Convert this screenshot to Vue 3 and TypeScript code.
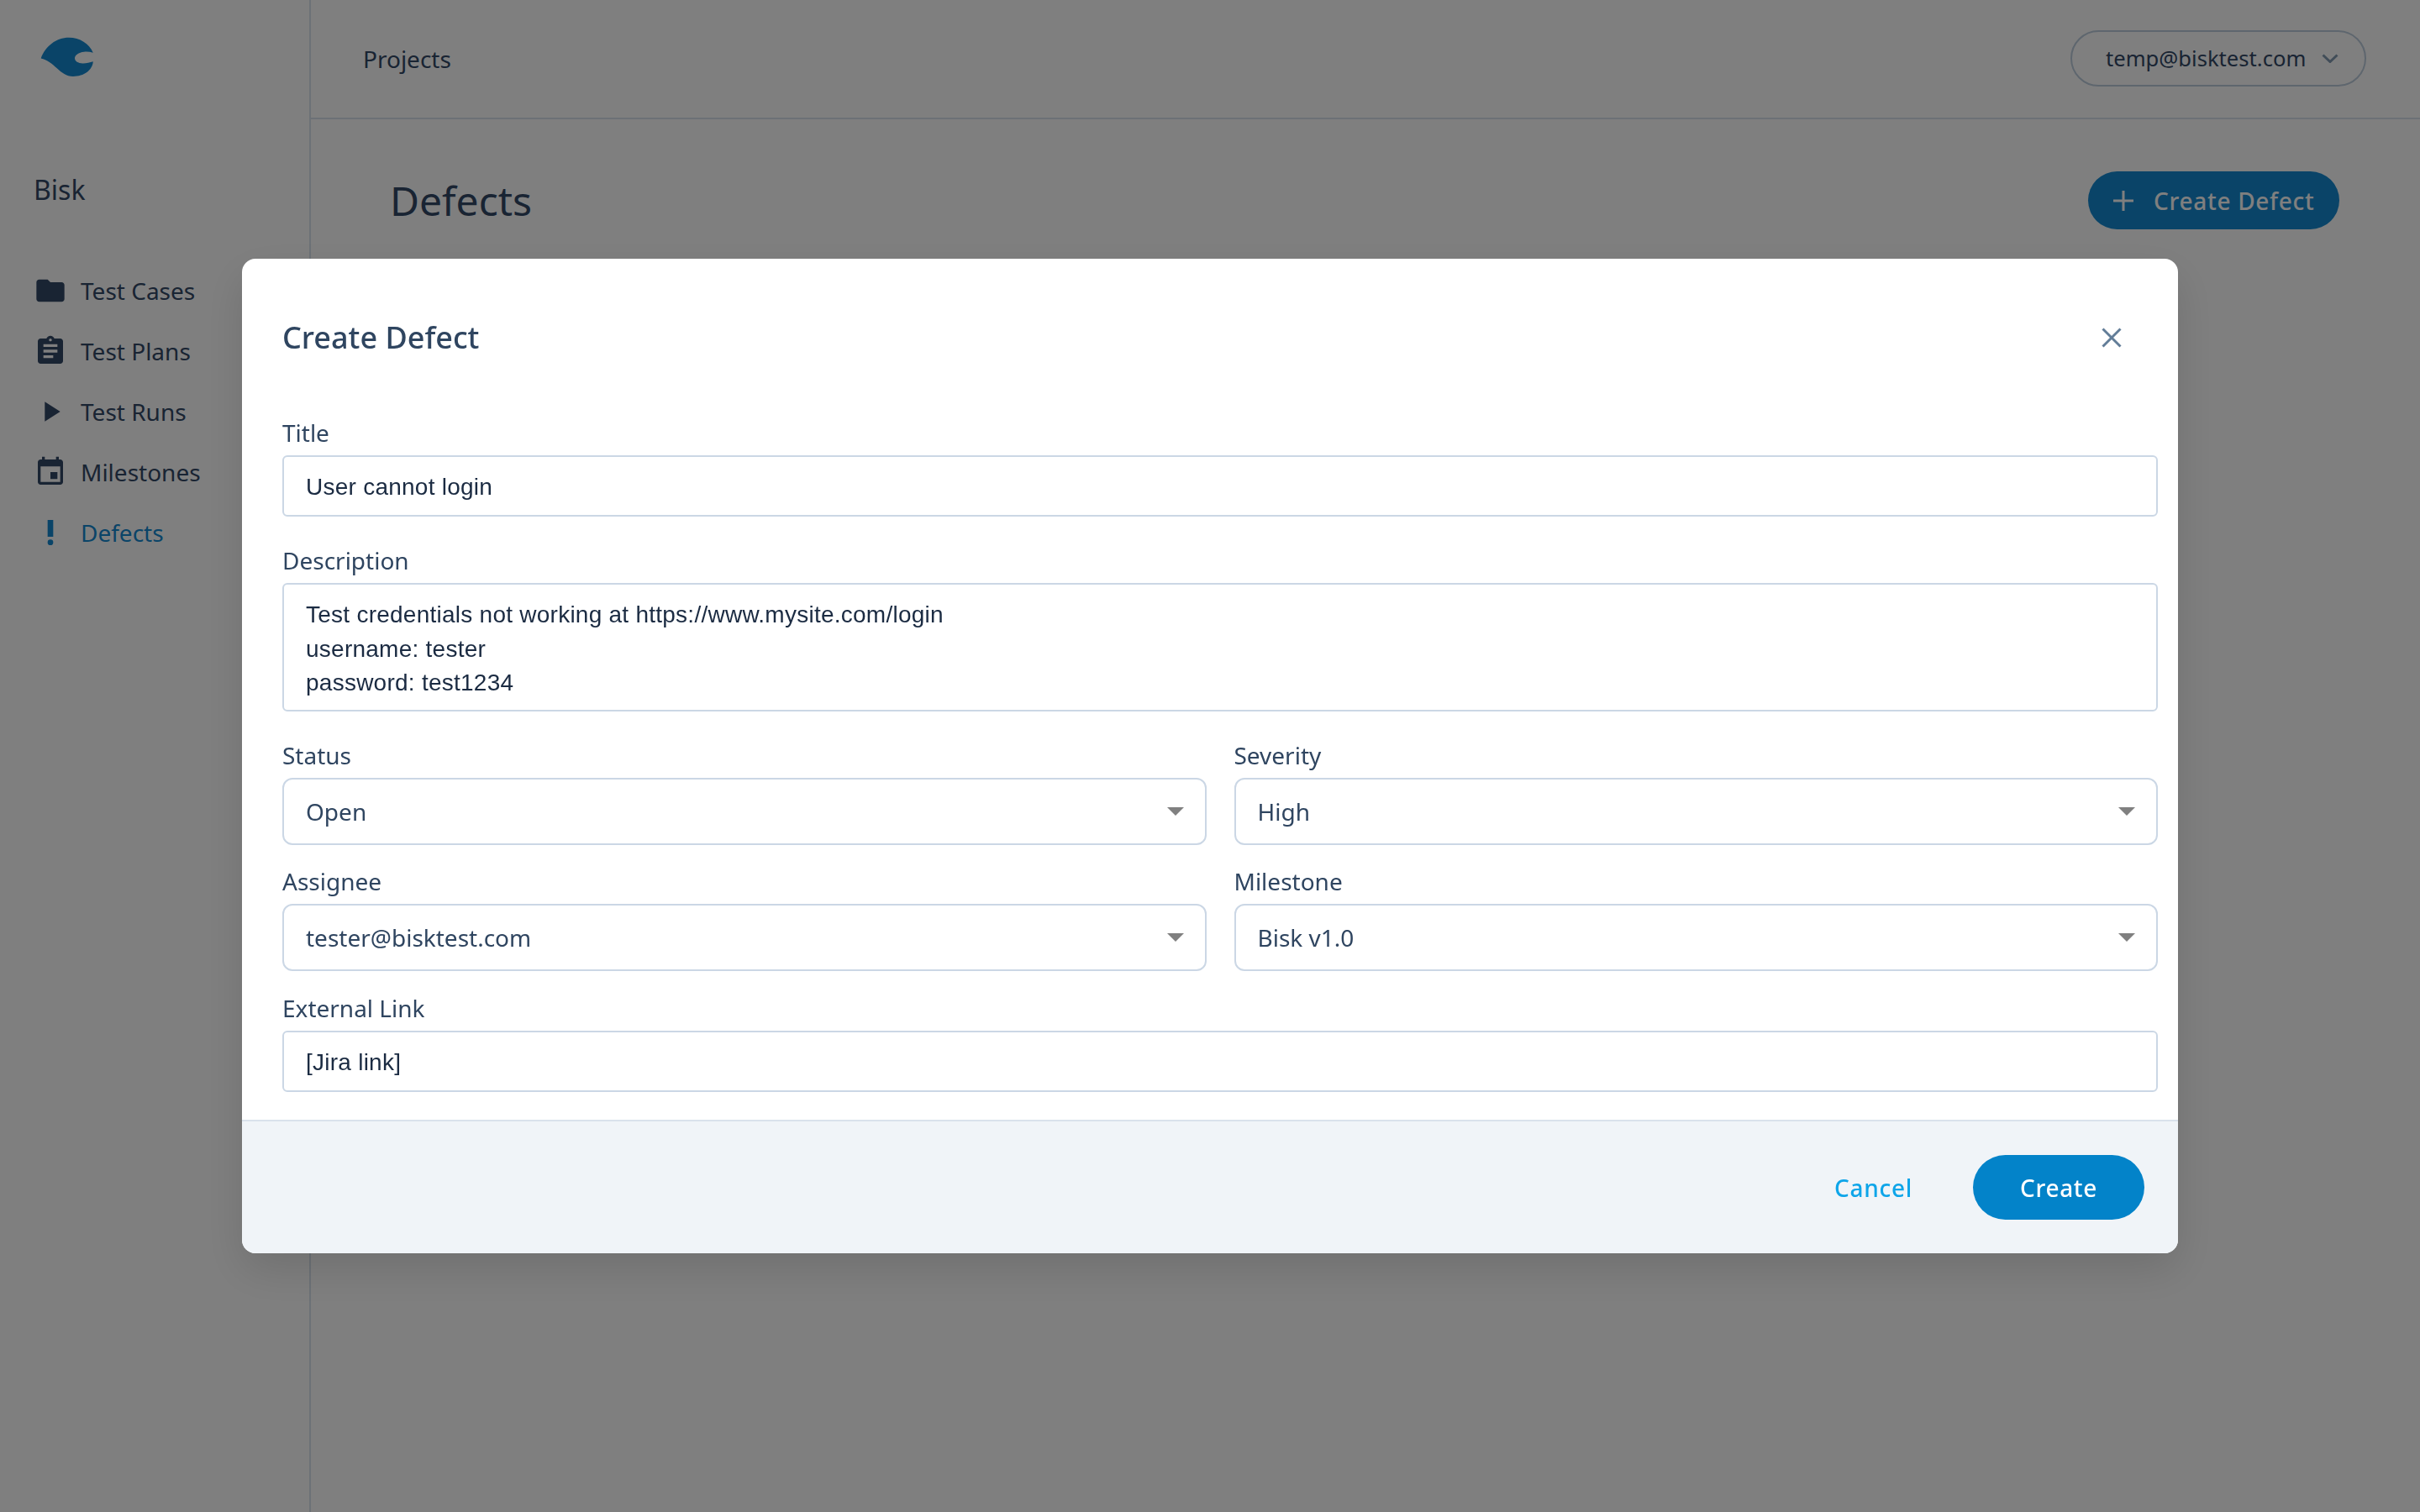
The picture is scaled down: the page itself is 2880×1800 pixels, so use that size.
<script setup lang="ts">
interface NavItem { label: string; active?: boolean; paths: string[] }
const navItems: NavItem[] = [
  { label: 'Test Cases', paths: ['M10 4H4c-1.1 0-1.99.9-1.99 2L2 18c0 1.1.9 2 2 2h16c1.1 0 2-.9 2-2V8c0-1.1-.9-2-2-2h-8l-2-2z'] },
  { label: 'Test Plans', paths: ['M19 3h-4.18C14.4 1.84 13.3 1 12 1c-1.3 0-2.4.84-2.82 2H5c-1.1 0-2 .9-2 2v14c0 1.1.9 2 2 2h14c1.1 0 2-.9 2-2V5c0-1.1-.9-2-2-2zm-7 0c.55 0 1 .45 1 1s-.45 1-1 1-1-.45-1-1 .45-1 1-1zm2 14H7v-2h7v2zm3-4H7v-2h10v2zm0-4H7V7h10v2z'] },
  { label: 'Test Runs', paths: ['M8 5v14l11-7z'] },
  { label: 'Milestones', paths: ['M17 12h-5v5h5v-5zM16 1v2H8V1H6v2H5c-1.11 0-1.99.9-1.99 2L3 19c0 1.1.89 2 2 2h14c1.1 0 2-.9 2-2V5c0-1.1-.9-2-2-2h-1V1h-2zm3 18H5V8h14v11z'] },
  { label: 'Defects', active: true, paths: ['M10 3h4v12h-4z', 'M14 19a2 2 0 1 1-4 0a2 2 0 0 1 4 0z'] },
]
const selects = [
  { label: 'Status', value: 'Open' },
  { label: 'Severity', value: 'High' },
  { label: 'Assignee', value: 'tester@bisktest.com' },
  { label: 'Milestone', value: 'Bisk v1.0' },
]
const description = 'Test credentials not working at https://www.mysite.com/login\nusername: tester\npassword: test1234'
</script>

<template>
  <div class="page">
    <aside class="sidebar">
      <svg class="logo" viewBox="48 44 64 48" width="64" height="48">
        <path d="M48.7 69.5C54 55 67 44.8 82 44.8C95 44.8 106 52 110.8 62.7C107 61.6 103 61.3 100 61.7C93.5 62.4 89 65.5 89 69.3C89 73 93 75.3 98.3 75.4C102.5 75.5 107 74.6 110.8 73.3C110 83.5 100 91 87 91C79 91 73.5 86.5 67.5 81C62 76 56 71 48.7 69.5Z" />
      </svg>
      <div class="org">Bisk</div>
      <nav class="nav">
        <a v-for="item in navItems" :key="item.label" class="nav-item" :class="{ active: item.active }">
          <svg class="nav-icon" viewBox="0 0 24 24" width="40" height="40">
            <path v-for="d in item.paths" :key="d" :d="d" />
          </svg>
          <span>{{ item.label }}</span>
        </a>
      </nav>
    </aside>
    <main class="main">
      <header class="topbar">
        <span class="crumb">Projects</span>
        <button class="account" type="button">
          <span>temp@bisktest.com</span>
          <svg viewBox="0 0 20 11" width="20" height="11" class="chev"><path d="M1.5 1.5L10 9.5L18.5 1.5" /></svg>
        </button>
      </header>
      <div class="page-head">
        <h1>Defects</h1>
        <button class="create-defect" type="button">
          <svg viewBox="0 0 24 24" width="24" height="24" class="plus"><path d="M12 0V24M0 12H24" /></svg>
          <span>Create Defect</span>
        </button>
      </div>
    </main>

    <div class="overlay">
      <section class="modal">
        <div class="modal-head">
          <h2>Create Defect</h2>
          <svg class="close" viewBox="0 0 24 24" width="24" height="24"><path d="M1.5 1.5L22.5 22.5M22.5 1.5L1.5 22.5" /></svg>
        </div>
        <form class="modal-body" @submit.prevent>
          <label class="field wide">
            <span class="label">Title</span>
            <input class="control" type="text" value="User cannot login" />
          </label>
          <label class="field wide">
            <span class="label">Description</span>
            <textarea class="control area" rows="3" :value="description"></textarea>
          </label>
          <div class="selects">
            <label v-for="s in selects" :key="s.label" class="field">
              <span class="label">{{ s.label }}</span>
              <span class="select-wrap">
                <select class="select"><option>{{ s.value }}</option></select>
                <i class="caret"></i>
              </span>
            </label>
          </div>
          <label class="field">
            <span class="label">External Link</span>
            <input class="control" type="text" value="[Jira link]" />
          </label>
        </form>
        <footer class="modal-foot">
          <button class="cancel" type="button">Cancel</button>
          <button class="create" type="button">Create</button>
        </footer>
      </section>
    </div>
  </div>
</template>

<style scoped>
.page {
  display: flex;
  height: 100vh;
  background: #fff;
  color: #334866;
  font-family: "Noto Sans", "Open Sans", sans-serif;
  font-size: 28px;
}
.sidebar {
  width: 368px;
  flex: none;
  border-right: 2px solid #d9e2ec;
  padding-top: 44px;
}
.logo { display: block; margin-left: 48px; fill: #1489d0; }
.org { margin: 112px 0 0 40px; font-size: 32px; line-height: 44px; height: 106px; }
.nav { display: flex; flex-direction: column; }
.nav-item { display: flex; align-items: center; height: 72px; padding-left: 40px; gap: 16px; }
.nav-icon { fill: currentColor; flex: none; }
.nav-item.active { color: #1489d0; }
.main { flex: 1; min-width: 0; }
.topbar {
  display: flex;
  align-items: center;
  justify-content: space-between;
  height: 139px;
  border-bottom: 2px solid #d9e2ec;
  padding: 0 64px 1px 62px;
}
.account {
  display: flex;
  align-items: center;
  gap: 19px;
  width: 352px;
  height: 67px;
  box-sizing: border-box;
  padding: 0 0 0 40px;
  border: 2px solid #bcccdc;
  border-radius: 34px;
  background: none;
  color: inherit;
  font: inherit;
  font-size: 25.6px;
}
.chev { fill: none; stroke: #829ab1; stroke-width: 3; }
.page-head {
  display: flex;
  align-items: center;
  justify-content: space-between;
  padding: 62px 96px 0 94px;
}
.page-head h1 { margin: 0; font-size: 48px; font-weight: 400; line-height: 69px; }
.create-defect {
  display: flex;
  align-items: center;
  gap: 24px;
  width: 299px;
  height: 69px;
  padding: 0 0 0 30px;
  box-sizing: border-box;
  border: 0;
  border-radius: 35px;
  background: #1489d0;
  color: #fff;
  font: inherit;
  font-weight: 500;
  letter-spacing: 0.7px;
}
.plus { fill: none; stroke: #fff; stroke-width: 3; }
.overlay { position: fixed; inset: 0; background: rgba(0, 0, 0, 0.5); }
.modal {
  position: absolute;
  left: 288px;
  top: 308px;
  width: 2304px;
  color: #2f4560;
  background: #fff;
  border-radius: 16px;
  overflow: hidden;
  box-shadow: 0 20px 50px rgba(0, 0, 0, 0.12);
}
.modal-head {
  display: flex;
  align-items: center;
  justify-content: space-between;
  height: 188px;
  padding: 0 67px 0 48px;
}
.modal-head h2 { margin: 0; font-size: 36px; font-weight: 500; line-height: 52px; }
.close { fill: none; stroke: #627d98; stroke-width: 3; }
.modal-body { padding: 0 24px 33px 48px; }
.field { display: flex; flex-direction: column; }
.wide { margin-bottom: 33px; }
.label { line-height: 39px; margin-bottom: 7px; }
.control {
  box-sizing: border-box;
  width: 100%;
  height: 73px;
  padding: 2px 26px 0;
  border: 2px solid #cbd7e5;
  border-radius: 6px;
  background: #fff;
  color: #1b2b42;
  font-family: "Liberation Sans", Arial, sans-serif;
  font-size: 28px;
  letter-spacing: 0.25px;
  outline: none;
}
.area { display: block; height: 153px; padding: 16px 26px; line-height: 40.5px; resize: none; overflow: hidden; }
.selects { display: grid; grid-template-columns: 1fr 1fr; column-gap: 33px; row-gap: 24px; margin-bottom: 25px; }
.select-wrap { position: relative; display: block; }
.select {
  display: block;
  box-sizing: border-box;
  width: 100%;
  height: 80px;
  padding: 0 26px;
  border: 2px solid #cbd7e5;
  border-radius: 12px;
  background: #fff;
  color: inherit;
  font: inherit;
  appearance: none;
  outline: none;
}
.caret {
  position: absolute;
  right: 27px;
  top: 35px;
  border-left: 10px solid transparent;
  border-right: 10px solid transparent;
  border-top: 10px solid #808080;
}
.modal-foot {
  display: flex;
  align-items: center;
  justify-content: flex-end;
  height: 157px;
  border-top: 2px solid #d9e2ec;
  background: #f0f4f8;
  padding-right: 40px;
  gap: 72px;
}
.modal-foot button { font: inherit; font-weight: 500; letter-spacing: 0.7px; border: 0; background: none; padding: 0; }
.cancel { color: #0ea5e9; }
.modal-foot .create { width: 204px; height: 77px; border-radius: 39px; background: #0383c9; color: #fff; }
</style>
